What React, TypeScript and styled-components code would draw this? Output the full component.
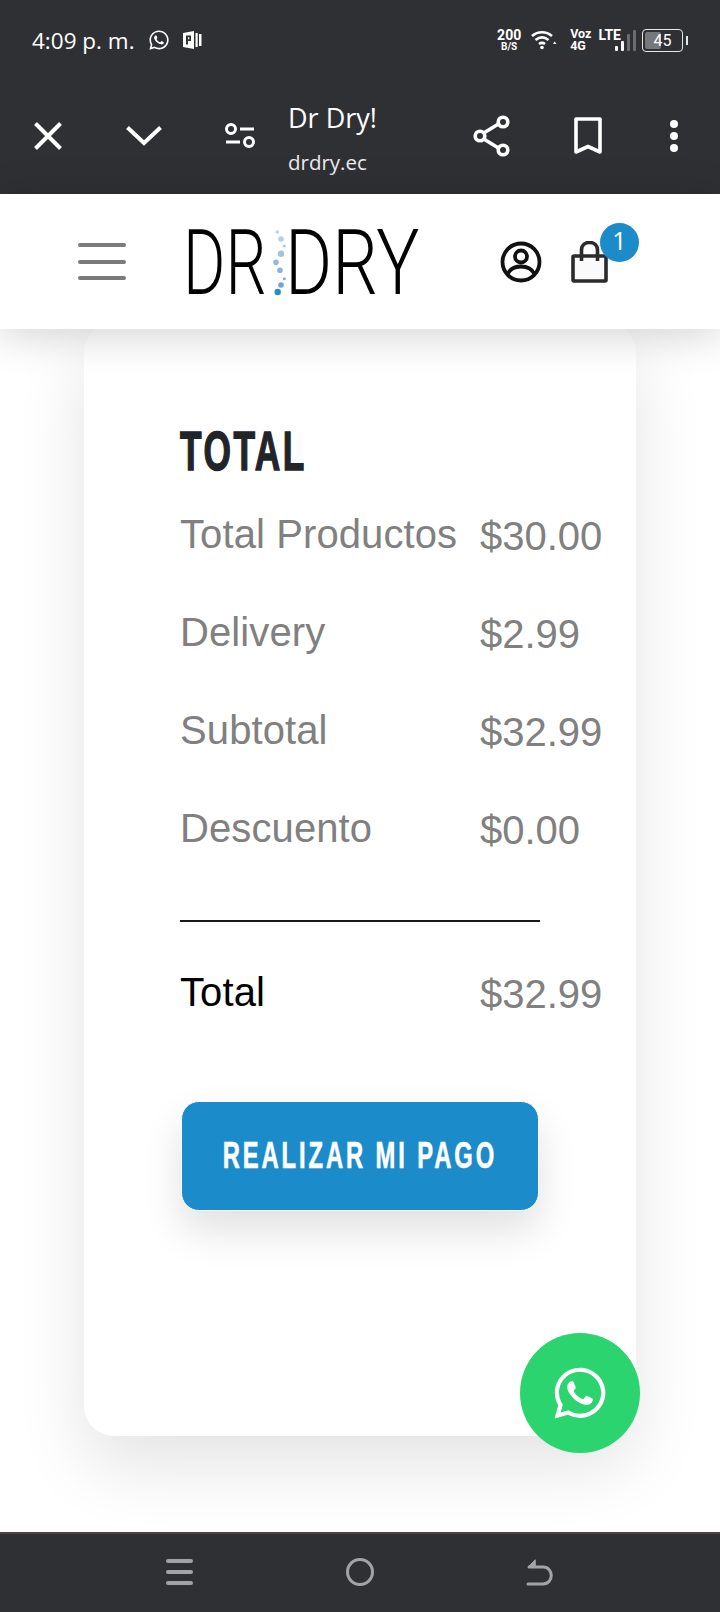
import styled, { createGlobalStyle } from 'styled-components';
import { FaWhatsapp } from 'react-icons/fa';

const DARK = '#2f3034';
const BLUE = '#1c8bca';

const GlobalStyle = createGlobalStyle`
  html, body {
    margin: 0;
    padding: 0;
    background: #fff;
    font-family: "Liberation Sans", Arial, sans-serif;
  }
  * { box-sizing: border-box; }
`;

const LOGO_DOTS = [
  { x: 92.3, y: 8, r: 1.8, fill: '#bcd4ec' },
  { x: 96, y: 15, r: 2.8, fill: '#b4cfea' },
  { x: 99.3, y: 22, r: 1.5, fill: '#a9c8e8' },
  { x: 96, y: 29.7, r: 3.2, fill: '#a2c3e6' },
  { x: 91, y: 38.3, r: 2.8, fill: '#94bae2' },
  { x: 95, y: 46.3, r: 2.8, fill: '#8ab4df' },
  { x: 99.3, y: 54.7, r: 1.5, fill: '#7eacdb' },
  { x: 96, y: 61, r: 2.8, fill: '#6ea4d8' },
  { x: 92.7, y: 68, r: 3.2, fill: '#2a8ccb' },
];

const ROWS = [
  { label: 'Total Productos', value: '$30.00' },
  { label: 'Delivery', value: '$2.99' },
  { label: 'Subtotal', value: '$32.99' },
  { label: 'Descuento', value: '$0.00' },
];

const App = () => {
  return (
    <Phone>
      <GlobalStyle />
      <Chrome>
        <StatusBar>
          <StatusLeft>
            <Clock>4:09 p. m.</Clock>
            <FaWhatsapp size={22} color="#fff" />
            <svg width="19" height="18" viewBox="0 0 19 18">
              <path d="M0 2l11-2v18L0 16z" fill="#fff" />
              <path
                fillRule="evenodd"
                d="M3 4.500h5v5.500H5v3.500H3zM5 6.300v2h1.300v-2z"
                fill={DARK}
              />
              <path d="M12.500 2h2.200v14h-2.200zM16 3h2.500v12H16z" fill="#fff" />
            </svg>
          </StatusLeft>
          <StatusRight>
            <StackedText>
              <strong>200</strong>
              <small>B/S</small>
            </StackedText>
            <svg width="26" height="22" viewBox="0 0 26 22" fill="none" stroke="#fff" strokeWidth="2.600">
              <path d="M1 7c6-5 14-5 20 0" />
              <path d="M4.500 11c4-3.200 9-3.200 13 0" />
              <path d="M8 15c2-1.500 4-1.500 6 0" />
              <circle cx="11" cy="18.500" r="1.800" fill="#fff" stroke="none" />
              <path d="M22 15l3.500 0-1.750-2.500z" fill="#fff" stroke="none" />
            </svg>
            <NetworkText>
              <span>Voz</span>
              <span>4G</span>
            </NetworkText>
            <LteGroup>
              <LteText>LTE</LteText>
              <SignalBar $h={5} $on />
              <SignalBar $h={10} $on />
              <SignalBar $h={17} />
              <SignalBar $h={21} />
            </LteGroup>
            <Battery>
              <BatteryFill />
              <BatteryLevel>45</BatteryLevel>
              <BatteryNib />
            </Battery>
          </StatusRight>
        </StatusBar>

        <Toolbar>
          <ToolIcon $w={28}>
            <svg width="28" height="28" viewBox="0 0 28 28" stroke="#fff" strokeWidth="4">
              <path d="M1.500 1.500l25 25M26.500 1.500l-25 25" />
            </svg>
          </ToolIcon>
          <ToolIcon $w={36} $ml={64}>
            <svg width="36" height="20" viewBox="0 0 36 20" fill="none" stroke="#fff" strokeWidth="4">
              <path d="M1.500 1.500L18 17 34.500 1.500" />
            </svg>
          </ToolIcon>
          <ToolIcon $w={30} $ml={63}>
            <svg width="30" height="26" viewBox="0 0 30 26" fill="none" stroke="#fff" strokeWidth="3">
              <circle cx="6" cy="6" r="4.500" />
              <path d="M15 6h14M1 19h14" />
              <circle cx="24" cy="19" r="4.500" />
            </svg>
          </ToolIcon>
          <PageTitle>
            <h1>Dr Dry!</h1>
            <p>drdry.ec</p>
          </PageTitle>
          <ToolIcon $w={38} $ml="auto">
            <svg width="38" height="42" viewBox="0 0 38 42" fill="none" stroke="#fff" strokeWidth="3.600">
              <path d="M10 18.500L27 8M10 23.500L27 34" />
              <circle cx="30" cy="7" r="4.800" />
              <circle cx="7" cy="21" r="4.800" />
              <circle cx="30" cy="35" r="4.800" />
            </svg>
          </ToolIcon>
          <ToolIcon $w={30} $ml={62}>
            <svg width="30" height="38" viewBox="0 0 30 38" fill="none" stroke="#fff" strokeWidth="3.600" strokeLinejoin="round">
              <path d="M3 2h24v33L15 29.500 3 35z" />
            </svg>
          </ToolIcon>
          <ToolIcon $w={10} $ml={66}>
            <Dots>
              <i />
              <i />
              <i />
            </Dots>
          </ToolIcon>
        </Toolbar>
      </Chrome>

      <SiteHeader>
        <Burger>
          <i />
          <i />
          <i />
        </Burger>
        <Logo viewBox="0 0 235 76" width="235" height="76">
          <LogoText transform="translate(-2 70) scale(0.72 1)">DR</LogoText>
          <LogoText transform="translate(100 70) scale(0.8 1)">DRY</LogoText>
          {LOGO_DOTS.map((dot) => (
            <circle key={dot.y} cx={dot.x} cy={dot.y} r={dot.r} fill={dot.fill} />
          ))}
        </Logo>
        <HeaderActions>
          <svg width="42" height="42" viewBox="0 0 42 42" fill="none" stroke="#111" strokeWidth="3.800">
            <circle cx="21" cy="21" r="18.500" />
            <circle cx="21" cy="15.500" r="6" />
            <path d="M7.500 33c3-6 8-7.500 13.500-7.500S31.500 27 34.500 33" />
          </svg>
          <CartBox>
            <svg width="38" height="42" viewBox="0 0 38 42" fill="none" stroke="#2b2b2b" strokeWidth="3.600">
              <rect x="2" y="15" width="33" height="25" rx="1" fill="#fafafa" />
              <path d="M10.500 20V9c0-10 16-10 16 0v11" />
            </svg>
            <CartBadge>1</CartBadge>
          </CartBox>
        </HeaderActions>
      </SiteHeader>

      <Main>
        <Card>
          <CardTitle>
            <span>TOTAL</span>
          </CardTitle>
          <Rows>
            {ROWS.map((row) => (
              <Row key={row.label}>
                <Label>{row.label}</Label>
                <Value>{row.value}</Value>
              </Row>
            ))}
          </Rows>
          <Divider />
          <Row>
            <Label $strong>Total</Label>
            <Value>$32.99</Value>
          </Row>
          <PayButton type="button">
            <span>REALIZAR MI PAGO</span>
          </PayButton>
        </Card>
        <WhatsappFab type="button">
          <FaWhatsapp size={58} color="#fff" />
        </WhatsappFab>
      </Main>

      <NavBar>
        <NavLines>
          <i />
          <i />
          <i />
        </NavLines>
        <svg width="28" height="28" viewBox="0 0 28 28" fill="none" stroke="#a3a3a5" strokeWidth="3">
          <circle cx="14" cy="14" r="12.500" />
        </svg>
        <svg width="28" height="28" viewBox="0 0 28 28" fill="none" stroke="#a3a3a5" strokeWidth="3" strokeLinecap="round">
          <path d="M2 26h15c11 0 11-17 0-17H3" />
          <path d="M9 2L2.500 8.500 9 9.500z" fill="#a3a3a5" strokeWidth="1" />
        </svg>
      </NavBar>
    </Phone>
  );
};

export default App;

const Phone = styled.div`
  display: flex;
  flex-direction: column;

  width: 720px;
  height: 1612px;
  overflow: hidden;

  background: #fff;
`;

const Chrome = styled.div`
  flex: none;

  height: 194px;

  background: ${DARK};
  color: #fff;
`;

const StatusBar = styled.div`
  display: flex;
  justify-content: space-between;
  align-items: center;

  height: 80px;
  padding: 0 37px 0 32px;
`;

const StatusLeft = styled.div`
  display: flex;
  align-items: center;
  gap: 13px;
`;

const Clock = styled.span`
  font-family: "Open Sans", "Noto Sans", sans-serif;
  font-size: 22.500px;
`;

const StatusRight = styled.div`
  display: flex;
  align-items: center;
  gap: 10px;
`;

const StackedText = styled.div`
  display: flex;
  flex-direction: column;
  align-items: center;

  font-family: Roboto, sans-serif;
  line-height: 10px;

  strong {
    font-size: 14px;
    font-weight: 700;
    line-height: 13px;
  }

  small {
    font-size: 10px;
    font-weight: 700;
  }
`;

const NetworkText = styled.div`
  display: flex;
  flex-direction: column;

  margin-left: 3px;

  font-family: Roboto, sans-serif;
  font-size: 12.500px;
  font-weight: 700;
  line-height: 12px;
`;

const LteGroup = styled.div`
  display: flex;
  align-items: flex-end;
  gap: 3px;

  height: 22px;
  margin-left: -3px;
`;

const LteText = styled.span`
  align-self: flex-start;

  margin-right: -9px;

  font-family: Roboto, sans-serif;
  font-size: 14px;
  font-weight: 700;
  line-height: 12px;
`;

const SignalBar = styled.span<{ $h: number; $on?: boolean }>`
  width: 3px;
  height: ${({ $h }) => $h}px;
  border-radius: 1px;

  background: ${({ $on }) => ($on ? '#fff' : '#6b6c6f')};
`;

const Battery = styled.div`
  position: relative;

  display: flex;
  justify-content: center;
  align-items: center;

  width: 41px;
  height: 23px;
  margin-left: -4px;
  border: 1.500px solid #e6e6e6;
  border-radius: 4px;
`;

const BatteryFill = styled.span`
  position: absolute;
  top: 2px;
  bottom: 2px;
  left: 2px;

  width: 16px;
  border-radius: 2px;

  background: #77787b;
`;

const BatteryLevel = styled.span`
  position: relative;

  font-family: Roboto, sans-serif;
  font-size: 16px;
`;

const BatteryNib = styled.span`
  position: absolute;
  top: 6px;
  right: -6px;

  width: 2px;
  height: 9px;

  background: #e6e6e6;
`;

const Toolbar = styled.div`
  display: flex;
  align-items: center;

  height: 114px;
  padding: 0 41px 2px 34px;
`;

const ToolIcon = styled.div<{ $w: number; $ml?: number | string }>`
  display: flex;
  flex: none;
  justify-content: center;
  align-items: center;

  width: ${({ $w }) => $w}px;
  margin-left: ${({ $ml }) =>
    typeof $ml === 'number' ? `${$ml}px` : ($ml ?? 0)};
`;

const PageTitle = styled.div`
  margin-left: 33px;

  font-family: "Open Sans", "Noto Sans", sans-serif;

  h1 {
    margin: 4px 0 0;

    font-size: 27px;
    font-weight: 400;
    line-height: 38px;
  }

  p {
    margin: 10px 0 0;

    font-size: 20.500px;
    line-height: 30px;
    color: #ececec;
  }
`;

const Dots = styled.div`
  display: flex;
  flex-direction: column;
  gap: 4px;

  i {
    width: 8px;
    height: 8px;
    border-radius: 50%;

    background: #fff;
  }
`;

const SiteHeader = styled.header`
  position: relative;
  z-index: 2;

  display: flex;
  flex: none;
  align-items: center;

  height: 135px;
  padding: 0 0 0 78px;

  background: #fff;
  box-shadow: 0 6px 40px rgba(0, 0, 0, 0.18);
`;

const Burger = styled.div`
  display: flex;
  flex-direction: column;
  gap: 12.500px;

  width: 48px;

  i {
    height: 4px;
    border-radius: 2px;

    background: #7b7b7b;
  }
`;

const Logo = styled.svg`
  margin-left: 59px;
  overflow: visible;
`;

const LogoText = styled.text`
  font-family: Roboto, sans-serif;
  font-size: 90px;
  font-weight: 300;
`;

const HeaderActions = styled.div`
  display: flex;
  align-items: center;
  gap: 29px;

  margin-left: 80px;
`;

const CartBox = styled.div`
  position: relative;

  display: flex;

  width: 38px;
`;

const CartBadge = styled.span`
  position: absolute;
  top: -18px;
  left: 29px;

  display: flex;
  justify-content: center;
  align-items: center;

  width: 39px;
  height: 39px;
  padding-bottom: 4px;
  border-radius: 50%;

  background: ${BLUE};
  color: #fff;
  font-family: "Open Sans", sans-serif;
  font-size: 25px;
`;

const Main = styled.main`
  position: relative;

  flex: 1;

  padding: 0 84px;
`;

const Card = styled.section`
  display: flex;
  flex-direction: column;

  height: 1114px;
  margin-top: -7px;
  padding: 0 0 0 96px;
  border-radius: 30px;

  background: #fff;
  box-shadow: 0 30px 70px rgba(0, 0, 0, 0.11);
`;

const CardTitle = styled.h2`
  height: 56px;
  margin: 101px 0 32px;

  color: #212529;
  font-family: "Liberation Sans", sans-serif;
  font-size: 56px;
  font-weight: 700;
  line-height: 56px;
  letter-spacing: 4px;

  span {
    display: inline-block;

    transform: scaleX(0.63);
    transform-origin: left center;
    -webkit-text-stroke: 1.500px #212529;
  }
`;

const Rows = styled.div`
  display: flex;
  flex-direction: column;
  gap: 50px;
`;

const Row = styled.div`
  display: flex;
`;

const Label = styled.span<{ $strong?: boolean }>`
  flex: none;

  width: 300px;

  color: ${({ $strong }) => ($strong ? '#000' : '#808080')};
  font-size: 40px;
  line-height: 46px;
  letter-spacing: 0.1px;
`;

const Value = styled.span`
  padding-top: 2px;

  color: #808080;
  font-size: 40px;
  line-height: 46px;
  white-space: nowrap;
`;

const Divider = styled.hr`
  width: 360px;
  height: 2px;
  margin: 67px 0 47px;
  border: 0;

  background: #1a1a1a;
`;

const PayButton = styled.button`
  display: flex;
  justify-content: center;
  align-items: center;

  width: 358px;
  height: 110px;
  margin: 84px 0 0 1px;
  border: 1px solid #fff;
  border-radius: 18px;

  background: ${BLUE};
  box-shadow: 0 20px 40px rgba(0, 0, 0, 0.12);
  color: #fff;
  font-family: "Liberation Sans", sans-serif;
  font-size: 36px;
  font-weight: 700;
  white-space: nowrap;

  span {
    display: inline-block;

    letter-spacing: 4.400px;
    transform: scaleX(0.66);
    -webkit-text-stroke: 0.600px #fff;
  }
`;

const WhatsappFab = styled.button`
  position: absolute;
  top: 1004px;
  left: 520px;

  display: flex;
  justify-content: center;
  align-items: center;

  width: 120px;
  height: 120px;
  padding: 0;
  border: 0;
  border-radius: 50%;

  background: #2bd46f;
`;

const NavBar = styled.nav`
  display: flex;
  flex: none;
  justify-content: space-between;
  align-items: center;

  height: 80px;
  padding: 0 166px 2px 166px;
  border-top: 2px solid #4b4442;

  background: ${DARK};
`;

const NavLines = styled.div`
  display: flex;
  flex-direction: column;
  gap: 7px;

  width: 27px;

  i {
    height: 4px;
    border-radius: 2px;

    background: #a3a3a5;
  }
`;
